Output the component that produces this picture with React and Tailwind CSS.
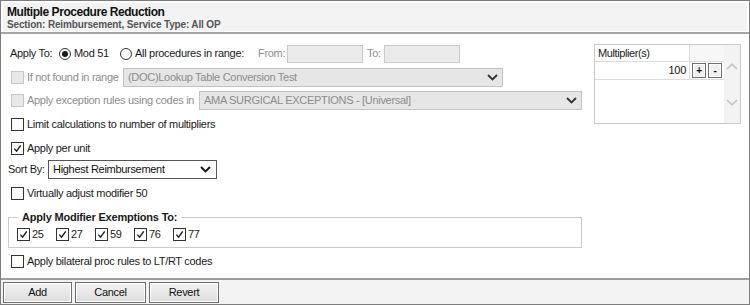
import * as React from "react";

function cx(...classes) {
  return classes.filter(Boolean).join(" ");
}

function Check({ checked = false, disabled = false, className = "" }) {
  return (
    <span
      className={cx(
        "flex h-[13px] w-[13px] shrink-0 items-center justify-center border",
        disabled ? "border-[#c6c6c6] bg-[#e8e8e8]" : "border-[#333] bg-white",
        className
      )}
    >
      {checked && (
        <svg width="9" height="9" viewBox="0 0 9 9">
          <path d="M1.3 4.6 L3.6 7.1 L7.7 1.4" fill="none" stroke="#1a1a1a" strokeWidth="1.4" />
        </svg>
      )}
    </span>
  );
}

function Radio({ checked = false }) {
  return (
    <span className="flex h-[12px] w-[12px] shrink-0 items-center justify-center rounded-full border border-[#333] bg-white">
      {checked && <span className="h-[6px] w-[6px] rounded-full bg-[#1a1a1a]" />}
    </span>
  );
}

function Chevron({ color = "#2a2a2a" }) {
  return (
    <svg width="11" height="7" viewBox="0 0 11 7">
      <path d="M1 1 L5.5 5.5 L10 1" fill="none" stroke={color} strokeWidth="1.8" />
    </svg>
  );
}

function Select({ value, disabled = false, className = "" }) {
  return (
    <div
      className={cx(
        "flex h-[19px] items-center justify-between border pl-[4px] pr-[4px]",
        disabled ? "border-[#c2c2c2] bg-[#e6e6e6] text-[#8c8c8c]" : "border-[#555] bg-white text-[#111]",
        className
      )}
    >
      <span className="truncate">{value}</span>
      <Chevron color={disabled ? "#333" : "#111"} />
    </div>
  );
}

function CheckRow({ label, checked, disabled, className = "" }) {
  return (
    <div className={cx("flex h-[19px] items-center pl-[3px]", className)}>
      <Check checked={checked} disabled={disabled} />
      <span className={cx("ml-[3px]", disabled ? "text-[#8c8c8c]" : "")}>{label}</span>
    </div>
  );
}

function FooterButton({ children, className = "" }) {
  return (
    <button
      type="button"
      className={cx(
        "h-[21px] border border-[#6f6f6f] bg-gradient-to-b from-[#f3f3f3] to-[#dcdcdc] text-center text-[#111] shadow-[inset_0_0_0_1px_#ffffff]",
        className
      )}
    >
      {children}
    </button>
  );
}

function SmallButton({ children }) {
  return (
    <span className="flex h-[15px] w-[14px] items-center justify-center border border-[#6f6f6f] bg-[#f0f0f0] text-[10px] font-bold leading-none text-[#111] shadow-[inset_0_0_0_1px_#ffffff]">
      {children}
    </span>
  );
}

const modifiers = ["25", "27", "59", "76", "77"];

export default function App() {
  return (
    <div
      className="flex h-[305px] w-[750px] flex-col border border-[#7d7d7d] bg-white text-[11px] leading-[13px] tracking-[-0.3px] text-[#1a1a1a]"
      style={{ fontFamily: '"Liberation Sans", Arial, sans-serif' }}
    >
      <div className="border-b-2 border-[#a5a5a5] p-[2px] pb-[1px]">
        <div className="h-[28px] bg-[#f3f3f3] px-[4px] pt-[2px]">
          <p className="text-[12px] font-bold leading-[14px] tracking-[-0.45px] text-[#111]">Multiple Procedure Reduction</p>
          <p className="text-[10px] font-bold leading-[12px] tracking-[-0.15px] text-[#555]">
            Section: Reimbursement, Service Type: All OP
          </p>
        </div>
      </div>

      <div className="flex flex-1 px-[7px] pt-[10px]">
        <div className="flex w-[574px] flex-col">
          <div className="flex h-[19px] items-center pl-[2px]">
            <span className="w-[49px]">Apply To:</span>
            <Radio checked />
            <span className="ml-[3px] w-[46px]">Mod 51</span>
            <Radio />
            <span className="ml-[3px] w-[123px]">All procedures in range:</span>
            <span className="w-[29px] text-[#8c8c8c]">From:</span>
            <span className="h-[18px] w-[76px] border border-[#c9c9c9] bg-[#ebebeb]" />
            <span className="ml-[4px] w-[17px] text-[#8c8c8c]">To:</span>
            <span className="h-[18px] w-[76px] border border-[#c9c9c9] bg-[#ebebeb]" />
          </div>

          <div className="mt-[5px] flex h-[19px] items-center pl-[3px]">
            <Check disabled />
            <span className="ml-[3px] w-[96px] text-[#8c8c8c]">If not found in range</span>
            <Select disabled value="(DOC)Lookup Table Conversion Test" className="w-[380px]" />
          </div>

          <div className="mt-[4px] flex h-[19px] items-center pl-[3px]">
            <Check disabled />
            <span className="ml-[3px] w-[172px] text-[#8c8c8c]">Apply exception rules using codes in</span>
            <Select disabled value="AMA SURGICAL EXCEPTIONS - [Universal]" className="w-[383px]" />
          </div>

          <CheckRow className="mt-[5px]" label="Limit calculations to number of multipliers" />
          <CheckRow className="mt-[5px]" checked label="Apply per unit" />

          <div className="mt-[2px] flex h-[19px] items-center">
            <span className="w-[40px]">Sort By:</span>
            <Select value="Highest Reimbursement" className="w-[169px] pr-[5px]" />
          </div>

          <CheckRow className="mt-[5px]" label="Virtually adjust modifier 50" />

          <fieldset className="mt-[8px] border border-[#c9c9c9] px-[9px] pb-[6px]">
            <legend className="px-[4px] text-[11px] font-bold leading-[12px] tracking-[-0.2px]">
              Apply Modifier Exemptions To:
            </legend>
            <div className="-ml-[1px] mt-[5px] flex h-[13px] items-center">
              {modifiers.map((m) => (
                <div key={m} className="flex w-[39px] items-center">
                  <Check checked />
                  <span className="ml-[2px]">{m}</span>
                </div>
              ))}
            </div>
          </fieldset>

          <CheckRow className="mt-[4px]" label="Apply bilateral proc rules to LT/RT codes" />
        </div>

        <div className="ml-[12px] flex h-[80px] w-[147px] border border-[#c9c9c9]">
          <div className="flex w-[129px] flex-col">
            <div className="flex h-[17px] border-b border-[#dcdcdc]">
              <div className="flex w-[95px] items-center border-r border-[#dcdcdc] pl-[3px] tracking-[-0.4px] text-[#222]">
                Multiplier(s)
              </div>
              <div className="flex-1 bg-[#f7f7f7]" />
            </div>
            <div className="flex h-[18px] border-b border-[#dcdcdc]">
              <div className="flex w-[95px] items-center justify-end border-r border-[#dcdcdc] pr-[3px] text-[#111]">
                100
              </div>
              <div className="flex flex-1 items-center gap-[2px] pl-[2px]">
                <SmallButton>+</SmallButton>
                <SmallButton>-</SmallButton>
              </div>
            </div>
          </div>
          <div className="flex flex-1 flex-col items-center bg-[#f3f3f3] pt-[18px]">
            <svg width="12" height="7" viewBox="0 0 12 7">
              <path d="M1 6 L6 1.2 L11 6" fill="none" stroke="#c4c4c4" strokeWidth="1.6" />
            </svg>
            <svg className="mt-[29px]" width="12" height="7" viewBox="0 0 12 7">
              <path d="M1 1 L6 5.8 L11 1" fill="none" stroke="#c4c4c4" strokeWidth="1.6" />
            </svg>
          </div>
        </div>
      </div>

      <div className="flex h-[26px] gap-[3px] border-t-2 border-[#9d9d9d] bg-[#f3f3f3] pl-[2px] pt-[2px]">
        <FooterButton className="w-[69px]">Add</FooterButton>
        <FooterButton className="w-[71px]">Cancel</FooterButton>
        <FooterButton className="w-[70px]">Revert</FooterButton>
      </div>
    </div>
  );
}
